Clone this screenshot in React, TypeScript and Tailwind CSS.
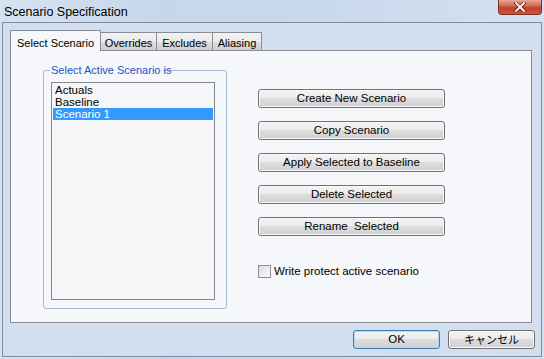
import { useState } from "react";

const ui = { fontFamily: '"Liberation Sans", Arial, sans-serif' };

// Classic Win7 push button
const WinButton = ({
  label,
  className = "",
  focused = false,
}: {
  label: string;
  className?: string;
  focused?: boolean;
}) => (
  <button
    type="button"
    className={
      "h-[19px] rounded-[3px] border whitespace-pre text-[11.5px] leading-none text-black bg-[linear-gradient(#f3f3f3,#ececec_45%,#dddddd_50%,#d0d0d0)] " +
      (focused
        ? "border-[#3c7fb1] shadow-[inset_0_0_0_1px_#a8dcf5] "
        : "border-[#707070] shadow-[inset_0_0_0_1px_#fbfbfb] ") +
      className
    }
  >
    {label}
  </button>
);

export default function App() {
  const [tab, setTab] = useState("Select Scenario");
  const [selected, setSelected] = useState("Scenario 1");
  const [writeProtect, setWriteProtect] = useState(false);

  const tabs = [
    { name: "Select Scenario", w: "w-[91px]" },
    { name: "Overrides", w: "w-[57px]" },
    { name: "Excludes", w: "w-[57px]" },
    { name: "Aliasing", w: "w-[50px]" },
  ];
  const scenarios = ["Actuals", "Baseline", "Scenario 1"];
  const actions = [
    "Create New Scenario",
    "Copy Scenario",
    "Apply Selected to Baseline",
    "Delete Selected",
    "Rename  Selected",
  ];

  return (
    <div
      className="w-[544px] h-[359px] flex flex-col overflow-hidden bg-[linear-gradient(90deg,#d6e2f0,#c6d7eb_30%,#c9d9ec_60%,#d4e1f0)]"
      style={ui}
    >
      {/* Title bar */}
      <div className="h-[22px] flex items-start justify-between">
        <div className="pl-[4px] pt-[3px] text-[12.5px] text-black">Scenario Specification</div>
        <div className="mr-[2px] w-[44px] h-[15px] rounded-b-[4px] border border-t-0 border-[#7a3327] bg-[linear-gradient(#e9a899,#d0624c_45%,#c2412a_55%,#c9553c)] flex items-center justify-center">
          <svg width="12" height="10" viewBox="0 0 12 10">
            <path d="M2 1 L10 9 M10 1 L2 9" stroke="#5a1f16" strokeWidth="3.4" strokeLinecap="square" />
            <path d="M2 1 L10 9 M10 1 L2 9" stroke="#ffffff" strokeWidth="1.8" strokeLinecap="square" />
          </svg>
        </div>
      </div>

      {/* Dialog client area */}
      <div className="mx-[2px] h-[335px] border border-[#7e8c9c] bg-[#d3dfee] pt-[7px] flex flex-col">
        <div className="pl-[7px] pr-[9px]">
          {/* Tab strip */}
          <div className="flex items-end h-[20px]">
            {tabs.map((t) =>
              t.name === tab ? (
                <div
                  key={t.name}
                  onClick={() => setTab(t.name)}
                  className={
                    "relative z-10 -mb-px h-[21px] border border-b-0 border-[#898c95] bg-[#f5f7fa] pl-[6px] pt-[4px] text-[11px] text-black " +
                    t.w
                  }
                >
                  {t.name}
                </div>
              ) : (
                <div
                  key={t.name}
                  onClick={() => setTab(t.name)}
                  className={
                    "-ml-px h-[18px] border border-b-0 border-[#898c95] bg-[linear-gradient(#f2f2f2,#ebebeb_50%,#dddddd_50%,#cfcfcf)] pt-[2px] text-center text-[11px] text-black " +
                    t.w
                  }
                >
                  {t.name}
                </div>
              )
            )}
          </div>

          {/* Tab panel */}
          <div className="h-[273px] border border-[#898c95] bg-[#f5f7fa] flex items-start pl-[32px]">
            {/* Group box */}
            <div className="relative mt-[19px] w-[184px] h-[239px] rounded-[3px] border border-[#a6bad5] pl-[7px] pt-[11px]">
              <div className="absolute left-[6px] -top-[9px] flex text-[11px] leading-[16px]">
                <span className="bg-[#f5f7fa] pl-[1px] pr-[3px] text-[#1a56c4]">Select Active Scenario</span>
                <span className="text-[#1a56c4]">is</span>
              </div>
              <div className="w-[164px] h-[218px] border border-[#828790] bg-[#f5f6f8] p-px">
                {scenarios.map((s) => (
                  <div
                    key={s}
                    onClick={() => setSelected(s)}
                    className={
                      "h-[12px] pl-[2px] text-[11.5px] leading-[12px] " +
                      (s === selected ? "bg-[#3399ff] text-white" : "text-black")
                    }
                  >
                    {s}
                  </div>
                ))}
              </div>
            </div>

            {/* Actions */}
            <div className="ml-[31px] mt-[38px] flex flex-col">
              <div className="flex flex-col gap-[13px]">
                {actions.map((a) => (
                  <WinButton key={a} label={a} className="w-[187px]" />
                ))}
              </div>
              <label
                className="mt-[27px] flex items-center gap-[3px] text-[11.5px] text-black cursor-default"
                onClick={() => setWriteProtect(!writeProtect)}
              >
                <span className="w-[13px] h-[13px] border border-[#8f8f8f] bg-[linear-gradient(135deg,#dcdcdc,#fbfbfb)] flex items-center justify-center">
                  {writeProtect && <span className="text-[10px] leading-none">✓</span>}
                </span>
                Write protect active scenario
              </label>
            </div>
          </div>
        </div>

        {/* Footer */}
        <div className="mt-[7px] flex justify-end gap-[8px] pr-[6px]">
          <WinButton label="OK" className="w-[87px]" focused />
          <button
            type="button"
            className="h-[19px] w-[87px] rounded-[3px] border border-[#707070] shadow-[inset_0_0_0_1px_#fbfbfb] bg-[linear-gradient(#f3f3f3,#ececec_45%,#dddddd_50%,#d0d0d0)] text-[11px] leading-none text-black"
            style={{ fontFamily: '"Noto Sans CJK JP", "Liberation Sans", sans-serif' }}
          >
            キャンセル
          </button>
        </div>
      </div>
    </div>
  );
}
